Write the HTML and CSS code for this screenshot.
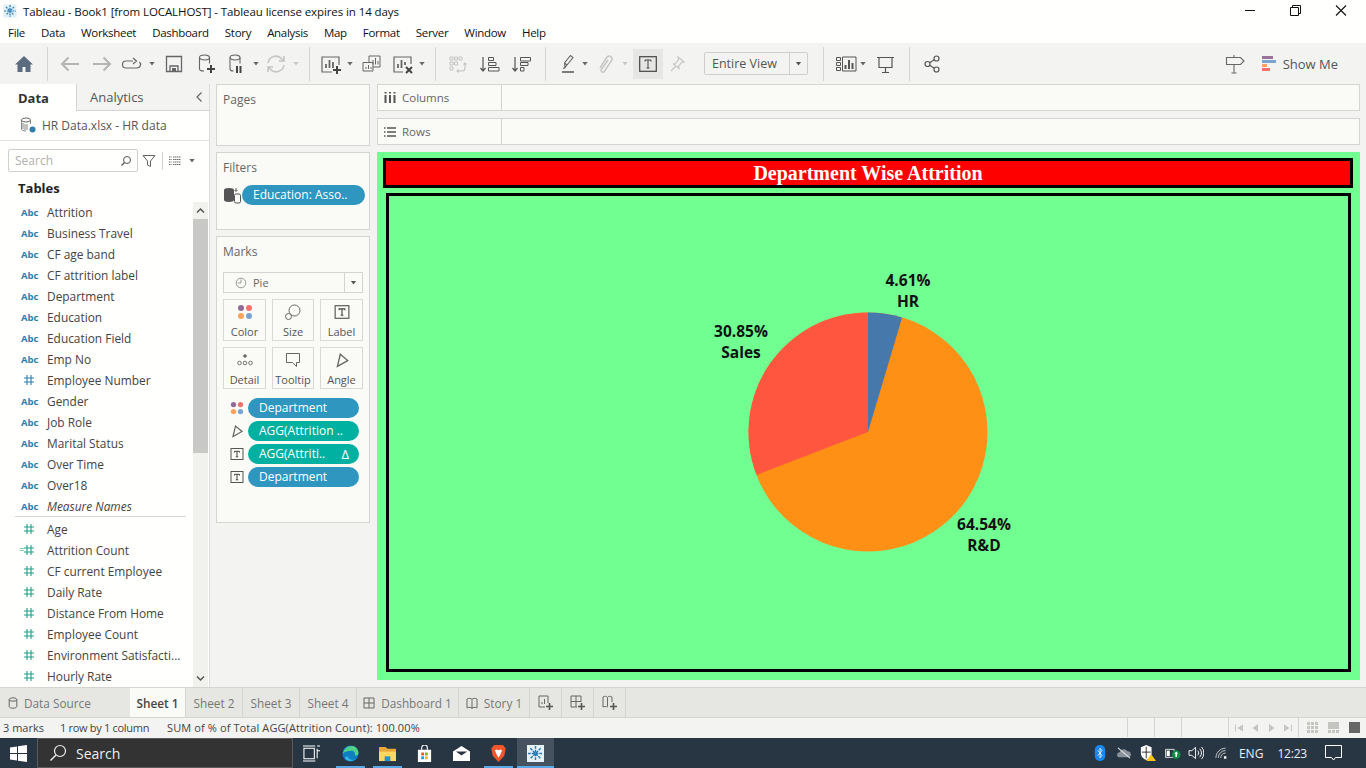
FILE: index.html
```html
<!DOCTYPE html>
<html lang="en">
<head>
	<meta charset="UTF-8">
	<title>Tableau - Book1</title>
	<link rel="stylesheet" href="styles.css">
</head>
<body>
	<svg class="sprite">
		<symbol id="hash" viewBox="0 0 12 12"><path d="M4 1v10M8 1v10M1 4h10M1 8h10" fill="none" stroke="currentColor" stroke-width="1.1"/></symbol>
		<symbol id="tbox" viewBox="0 0 14 14"><rect x="1" y="1.5" width="12" height="11" fill="none" stroke="#555" stroke-width="1"/><path d="M4.5 5.5V4.3h5v1.2M7 4.3v5.4M5.8 9.8h2.4" fill="none" stroke="#444" stroke-width="1"/></symbol>
		<symbol id="dots" viewBox="0 0 16 16"><circle cx="4" cy="4" r="3" fill="#8f6b95"/><circle cx="12" cy="4" r="3" fill="#f8706a"/><circle cx="4" cy="12" r="3" fill="#fba35c"/><circle cx="12" cy="12" r="3" fill="#7ba3d0"/></symbol>
		<symbol id="angle" viewBox="0 0 14 14"><path d="M3 12.5 5.5 2l6.5 5.5z" fill="none" stroke="#666" stroke-width="1.2"/></symbol>
	</svg>

	<!-- window title and menu -->
	<div class="titlebar">
		<svg class="app-logo" viewBox="0 0 14 14"><rect x="0.5" y="0.5" width="13" height="13" fill="#dff0f8"/><path d="M7 1v12M1 7h12M3 3l8 8M11 3l-8 8" stroke="#2a78ae" stroke-width="1.2" stroke-dasharray="2 0.8"/></svg>
		<span class="title-text">Tableau - Book1 [from LOCALHOST] - Tableau license expires in 14 days</span>
		<div class="win-btns">
			<svg viewBox="0 0 46 22"><path d="M19 10.500h10" stroke="#111"/></svg>
			<svg viewBox="0 0 46 22"><path d="M18.500 7.500h8v8h-8zM20.500 7.500v-2h8v8h-2" fill="none" stroke="#111"/></svg>
			<svg viewBox="0 0 46 22"><path d="M18 5.500l10 10M28 5.500l-10 10" stroke="#111" stroke-width="1.100"/></svg>
		</div>
	</div>
	<div class="menubar">
		<span>File</span><span>Data</span><span>Worksheet</span><span>Dashboard</span><span>Story</span><span>Analysis</span><span>Map</span><span>Format</span><span>Server</span><span>Window</span><span>Help</span>
	</div>

	<!-- toolbar -->
	<div class="toolbar">
		<svg class="tool m12" viewBox="0 0 24 24"><path d="M12 4 3 12.500h2.500V20h5v-5h3v5h5v-7.500H21z" fill="#5b6c80"/></svg>
		<i class="sep m11"></i>
		<svg class="tool m10" viewBox="0 0 24 24"><path d="M21 12H4M10.500 5.500 4 12l6.500 6.500" fill="none" stroke="#b4b4b2" stroke-width="2"/></svg>
		<svg class="tool m8" viewBox="0 0 24 24"><path d="M3 12h17M13.500 5.500 20 12l-6.500 6.500" fill="none" stroke="#b4b4b2" stroke-width="2"/></svg>
		<svg class="tool m5" viewBox="0 0 24 24"><path d="M14 9H7a3.500 3.500 0 0 0 0 7h11a3.500 3.500 0 0 0 2.500-6M14 6l3.500 3-3.500 3" fill="none" stroke="#666" stroke-width="1.200"/></svg>
		<i class="caret m5"></i>
		<svg class="tool m6" viewBox="0 0 24 24"><path d="M4.500 4.500h15v15h-15zM8 19.500v-5.500h8v5.500" fill="none" stroke="#666" stroke-width="1.300"/><path d="M10 16h4v3h-4z" fill="#666"/></svg>
		<svg class="tool m7" viewBox="0 0 24 24"><ellipse cx="11.500" cy="5.500" rx="5" ry="2.500" fill="none" stroke="#666" stroke-width="1.100"/><path d="M6.500 5.500v11.500c0 1.200 2 2 4.500 2M16.500 5.500v6" fill="none" stroke="#666" stroke-width="1.100"/><path d="M18 13v8M14 17h8" stroke="#444" stroke-width="2"/></svg>
		<svg class="tool m7" viewBox="0 0 24 24"><ellipse cx="11" cy="5.500" rx="5" ry="2.500" fill="none" stroke="#666" stroke-width="1.100"/><path d="M6 5.500v11.500c0 1.200 1.500 2 3.500 2M16 5.500v6" fill="none" stroke="#666" stroke-width="1.100"/><path d="M13 14v7M16.500 14v7" stroke="#444" stroke-width="2"/></svg>
		<i class="caret m4"></i>
		<svg class="tool m4" viewBox="0 0 24 24"><path d="M4 11a8 8 0 0 1 14-4l2 2M20 13a8 8 0 0 1-14 4l-2-2M20 4v5h-5M4 20v-5h5" fill="none" stroke="#c4c4c2" stroke-width="1.500"/></svg>
		<i class="caret faint m4"></i>
		<i class="sep m9"></i>

		<svg class="tool m9" viewBox="0 0 24 24"><path d="M20 13V5H3v15h10" fill="none" stroke="#666" stroke-width="1.200"/><path d="M7 16v-4M10.500 16V8M14 16v-6" stroke="#666" stroke-width="1.800"/><path d="M18 14v8M14 18h8" stroke="#444" stroke-width="2"/></svg>
		<i class="caret m3"></i>
		<svg class="tool m5" viewBox="0 0 24 24"><path d="M10 10V4h11v11h-7" fill="none" stroke="#666"/><path d="M4 10.500h10v8.500H4z" fill="#f3f4f2" stroke="#666"/><path d="M14 12.500V8M16.500 12.500V6M19 12.500V9M7 17v-2M9.500 17v-4M12 17v-2" stroke="#666"/></svg>
		<svg class="tool m8" viewBox="0 0 24 24"><path d="M20 12V5H3v15h9" fill="none" stroke="#666" stroke-width="1.200"/><path d="M7 16v-4M10.500 16V8M14 13v-3" stroke="#666" stroke-width="1.800"/><path d="M15 15l6 6M21 15l-6 6" stroke="#444" stroke-width="2"/></svg>
		<i class="caret m3"></i>
		<i class="sep m9"></i>

		<svg class="tool m9" viewBox="0 0 24 24"><path d="M5 5h3v3H5zM9.500 5h3v3h-3zM14 5h3v3h-3zM5 10h3v3H5zM9.500 10h3v3h-3zM5 15h3v3H5z" fill="none" stroke="#c4c4c2"/><path d="M20 11v5a3 3 0 0 1-3 3h-5M18.500 12.500 20 11l1.500 1.500M13.500 17.500 12 19l1.500 1.500" fill="none" stroke="#c4c4c2" stroke-width="1.100"/></svg>
		<svg class="tool m9" viewBox="0 0 24 24"><path d="M5 5v14M2.500 16 5 19l2.500-3" fill="none" stroke="#555" stroke-width="1.200"/><path d="M10.500 5.500h5v3h-5zM10.500 10.500h7.500v3h-7.500zM10.500 15.500h10.500v3.500H10.500z" fill="none" stroke="#555"/></svg>
		<svg class="tool m8" viewBox="0 0 24 24"><path d="M5 5v14M2.500 16 5 19l2.500-3" fill="none" stroke="#555" stroke-width="1.200"/><path d="M10.500 5.500h10v3.500h-10zM10.500 10.500h7.500v3h-7.500zM10.500 15.500h3.500v3.500h-3.500z" fill="none" stroke="#555"/></svg>
		<i class="sep m11"></i>

		<svg class="tool m10" viewBox="0 0 24 24"><path d="M9 15.500 8.500 11l6-7.500 2.500 2-6 7.500zM8.500 11l2.500 2M9 15.500l-2 1" fill="none" stroke="#666" stroke-width="1.100"/><path d="M6 20h12" stroke="#555" stroke-width="1.500"/></svg>
		<i class="caret m1"></i>
		<svg class="tool m4" viewBox="0 0 24 24"><path d="M7 16 14 5a3 3 0 0 1 5 3l-8 12a2 2 0 0 1-3-2l7-10" fill="none" stroke="#c4c4c2" stroke-width="1.400"/></svg>
		<i class="caret faint m4"></i>
		<div class="tool-on m4"><svg class="t-icon" viewBox="0 0 18 16"><rect x="0.700" y="0.700" width="16.600" height="14.600" fill="none" stroke="#444" stroke-width="1.200"/><path d="M6 5.500V4h6v1.500M9 4v8M7.500 12h3" fill="none" stroke="#444"/></svg></div>
		<svg class="tool m2" viewBox="0 0 24 24"><path d="M13 5l6 5-2.500.5-3 4 .5 2-5.500-4.500 2-.5 3-4zM10.500 14.500 6 19" fill="none" stroke="#c4c4c2" stroke-width="1.200"/></svg>
		<div class="fit m15"><span class="fit-text">Entire View</span><span class="fit-arrow"><i class="caret dark"></i></span></div>
		<i class="sep m15"></i>

		<svg class="tool m10" viewBox="0 0 24 24"><path d="M2.500 5.500h4v3h-4zM2.500 10.500h4v3h-4zM2.500 15.500h4v3h-4zM8.500 5h13.500v14H8.500z" fill="none" stroke="#555"/><path d="M11.500 17v-4M15 17V8M18.500 17v-6" stroke="#555" stroke-width="2"/></svg>
		<i class="caret m1"></i>
		<svg class="tool m6" viewBox="0 0 24 24"><path d="M4 5.500h17M6 5.500v10h13v-10M12.500 15.500v5M9 20.500h7" fill="none" stroke="#555" stroke-width="1.200"/></svg>
		<i class="sep m12"></i>
		<svg class="tool m10" viewBox="0 0 24 24"><circle cx="7.500" cy="12" r="2.500" fill="none" stroke="#555" stroke-width="1.200"/><circle cx="16.500" cy="6.500" r="2.500" fill="none" stroke="#555" stroke-width="1.200"/><circle cx="16.500" cy="17.500" r="2.500" fill="none" stroke="#555" stroke-width="1.200"/><path d="M9.700 10.700l4.600-2.900M9.700 13.300l4.600 2.900" stroke="#555" stroke-width="1.200"/></svg>

		<svg class="tool guide" viewBox="0 0 24 24"><path d="M3.500 5.500h14l3.500 3.500-3.500 3.500h-14zM11 3v2.500M11 12.500V21M8.500 21h5" fill="none" stroke="#666" stroke-width="1.100"/></svg>
		<div class="showme">
			<svg class="showme-icon" viewBox="0 0 15 16"><rect width="11" height="3" fill="#95739a"/><rect y="4" width="14" height="3" fill="#7ba3d0"/><rect y="8" width="5" height="3" fill="#fba35c"/><rect y="12" width="8" height="3" fill="#f8706a"/></svg>
			<span>Show Me</span>
		</div>
	</div>

	<div class="main">
		<!-- data pane -->
		<div class="data-pane">
			<div class="pane-tabs">
				<div class="pane-tab active">Data</div>
				<div class="pane-tab">Analytics<svg class="collapse" viewBox="0 0 8 12"><path d="M6.500 1.500 2 6l4.500 4.500" fill="none" stroke="#666" stroke-width="1.200"/></svg></div>
			</div>
			<div class="source">
				<svg class="source-icon" viewBox="0 0 16 16"><ellipse cx="6" cy="3" rx="4.500" ry="2" fill="none" stroke="#666"/><path d="M1.500 3v9c0 1 2 2 4.500 2M10.500 3v4M3 6v6M5 7v6M7 7v6" fill="none" stroke="#666" stroke-width="0.800"/><circle cx="12.500" cy="12.500" r="3" fill="#2e7ea8"/></svg>
				<span>HR Data.xlsx - HR data</span>
			</div>
			<div class="search-row">
				<div class="search"><span>Search</span><svg viewBox="0 0 12 12"><circle cx="7" cy="5" r="3.500" fill="none" stroke="#555"/><path d="M4.500 7.500 1.500 10.500" stroke="#555" stroke-width="1.200"/></svg></div>
				<svg class="funnel" viewBox="0 0 14 14"><path d="M1 1.500h12L8.500 7v5.500l-3-1.500V7z" fill="none" stroke="#666"/></svg>
				<i class="vline"></i>
				<svg class="listview" viewBox="0 0 12 10"><path d="M0 1h2.500M4 1h8M0 3.500h2.500M4 3.500h8M0 6h2.500M4 6h8M0 8.500h2.500M4 8.500h8" stroke="#666" stroke-dasharray="1.500 0.500"/></svg>
				<i class="caret m7"></i>
			</div>
			<div class="tables-head">Tables</div>
			<div class="fields-wrap">
				<div class="fields">
					<div class="field"><b class="abc">Abc</b><span>Attrition</span></div>
					<div class="field"><b class="abc">Abc</b><span>Business Travel</span></div>
					<div class="field"><b class="abc">Abc</b><span>CF age band</span></div>
					<div class="field"><b class="abc">Abc</b><span>CF attrition label</span></div>
					<div class="field"><b class="abc">Abc</b><span>Department</span></div>
					<div class="field"><b class="abc">Abc</b><span>Education</span></div>
					<div class="field"><b class="abc">Abc</b><span>Education Field</span></div>
					<div class="field"><b class="abc">Abc</b><span>Emp No</span></div>
					<div class="field"><svg class="hash blue"><use href="#hash"/></svg><span>Employee Number</span></div>
					<div class="field"><b class="abc">Abc</b><span>Gender</span></div>
					<div class="field"><b class="abc">Abc</b><span>Job Role</span></div>
					<div class="field"><b class="abc">Abc</b><span>Marital Status</span></div>
					<div class="field"><b class="abc">Abc</b><span>Over Time</span></div>
					<div class="field"><b class="abc">Abc</b><span>Over18</span></div>
					<div class="field"><b class="abc">Abc</b><span class="italic">Measure Names</span></div>
					<div class="field-rule"></div>
					<div class="field"><svg class="hash"><use href="#hash"/></svg><span>Age</span></div>
					<div class="field"><em class="calc">=</em><svg class="hash"><use href="#hash"/></svg><span>Attrition Count</span></div>
					<div class="field"><svg class="hash"><use href="#hash"/></svg><span>CF current Employee</span></div>
					<div class="field"><svg class="hash"><use href="#hash"/></svg><span>Daily Rate</span></div>
					<div class="field"><svg class="hash"><use href="#hash"/></svg><span>Distance From Home</span></div>
					<div class="field"><svg class="hash"><use href="#hash"/></svg><span>Employee Count</span></div>
					<div class="field"><svg class="hash"><use href="#hash"/></svg><span>Environment Satisfacti...</span></div>
					<div class="field"><svg class="hash"><use href="#hash"/></svg><span>Hourly Rate</span></div>
				</div>
				<div class="scrollbar">
					<svg class="scroll-btn" viewBox="0 0 15 17"><path d="M4 10.500 7.500 7l3.500 3.500" fill="none" stroke="#555" stroke-width="1.500"/></svg>
					<div class="scroll-thumb"></div>
					<svg class="scroll-btn end" viewBox="0 0 15 17"><path d="M4 6.500 7.500 10 11 6.500" fill="none" stroke="#555" stroke-width="1.500"/></svg>
				</div>
			</div>
		</div>

		<!-- pages, filters, marks -->
		<div class="cards">
			<div class="card pages"><div class="card-title">Pages</div></div>
			<div class="card filters">
				<div class="card-title">Filters</div>
				<div class="filter-row">
					<svg class="filter-icon" viewBox="0 0 18 18"><ellipse cx="6" cy="4" rx="5" ry="2" fill="#555"/><path d="M1 4v10c0 1.200 2 2 5 2s5-.8 5-2V4z" fill="#555"/><path d="M13 2v3M11.500 4 13 5.500 14.500 4" fill="none" stroke="#555"/><rect x="11.500" y="8" width="6" height="9" rx="1.500" fill="#fafaf7" stroke="#555"/></svg>
					<div class="pill blue wide">Education: Asso..</div>
				</div>
			</div>
			<div class="card marks">
				<div class="card-title">Marks</div>
				<div class="mark-type">
					<svg viewBox="0 0 12 12"><circle cx="6" cy="6" r="4.800" fill="none" stroke="#999"/><path d="M6 2.500V6H2.800" fill="none" stroke="#999"/></svg>
					<span class="mark-name">Pie</span>
					<span class="mark-arrow"><i class="caret dark"></i></span>
				</div>
				<div class="mark-btns">
					<div class="mark-btn"><svg viewBox="0 0 16 16"><use href="#dots"/></svg><span>Color</span></div>
					<div class="mark-btn"><svg viewBox="0 0 16 16"><circle cx="9.500" cy="6.500" r="5.500" fill="none" stroke="#666"/><circle cx="3.500" cy="12.500" r="3" fill="#fafaf7" stroke="#666"/></svg><span>Size</span></div>
					<div class="mark-btn"><svg viewBox="0 0 14 14"><use href="#tbox"/></svg><span>Label</span></div>
					<div class="mark-btn"><svg viewBox="0 0 16 16"><circle cx="8" cy="4" r="1.800" fill="#666"/><circle cx="2.500" cy="11" r="1.800" fill="none" stroke="#666" stroke-width="0.900"/><circle cx="8" cy="11" r="1.800" fill="none" stroke="#666" stroke-width="0.900"/><circle cx="13.500" cy="11" r="1.800" fill="none" stroke="#666" stroke-width="0.900"/></svg><span>Detail</span></div>
					<div class="mark-btn"><svg viewBox="0 0 16 16"><path d="M1.500 1.500h13v9h-3v4l-4-4h-6z" fill="none" stroke="#666"/></svg><span>Tooltip</span></div>
					<div class="mark-btn"><svg viewBox="0 0 14 14"><use href="#angle"/></svg><span>Angle</span></div>
				</div>
				<div class="pill-row"><svg class="pill-icon" viewBox="0 0 16 16"><use href="#dots"/></svg><div class="pill blue">Department</div></div>
				<div class="pill-row"><svg class="pill-icon" viewBox="0 0 14 14"><use href="#angle"/></svg><div class="pill teal">AGG(Attrition ..</div></div>
				<div class="pill-row"><svg class="pill-icon" viewBox="0 0 14 14"><use href="#tbox"/></svg><div class="pill teal split"><span>AGG(Attriti..</span><span class="delta">&#916;</span></div></div>
				<div class="pill-row"><svg class="pill-icon" viewBox="0 0 14 14"><use href="#tbox"/></svg><div class="pill blue">Department</div></div>
			</div>
		</div>

		<!-- shelves and view -->
		<div class="workspace">
			<div class="shelf">
				<div class="shelf-name"><svg viewBox="0 0 12 12"><path d="M1.500 3v8M6 3v8M10.500 3v8" stroke="#555" stroke-width="2"/><path d="M1.500 0v1.500M6 0v1.500M10.500 0v1.500" stroke="#555" stroke-width="2"/></svg>Columns</div>
			</div>
			<div class="shelf">
				<div class="shelf-name"><svg viewBox="0 0 12 12"><path d="M3 2h9M3 6h9M3 10h9M0 2h1.500M0 6h1.500M0 10h1.500" stroke="#555" stroke-width="1.500"/></svg>Rows</div>
			</div>
			<div class="canvas">
				<div class="view-title">Department Wise Attrition</div>
				<div class="view-frame">
					<svg class="pie" width="959" height="473" viewBox="0 0 959 473">
						<circle cx="479" cy="236" r="119.500" fill="#ff9016"/>
						<path d="M479 236V116.500A119.500 119.500 0 0 1 513.100 121.500z" fill="#4778ac"/>
						<path d="M479 236 367.500 278.900A119.500 119.500 0 0 1 479 116.500z" fill="#ff5640"/>
						<text class="pie-label" x="519" y="90">4.61%</text>
						<text class="pie-label" x="519" y="111">HR</text>
						<text class="pie-label" x="352" y="141">30.85%</text>
						<text class="pie-label" x="352" y="162">Sales</text>
						<text class="pie-label" x="595" y="334">64.54%</text>
						<text class="pie-label" x="595" y="355">R&amp;D</text>
					</svg>
				</div>
			</div>
		</div>
	</div>

	<!-- sheet tabs -->
	<div class="tabs">
		<div class="tab source-tab"><svg viewBox="0 0 10 12"><ellipse cx="5" cy="2.500" rx="3.800" ry="1.700" fill="none" stroke="#666"/><path d="M1.200 2.500v7c0 1 1.700 1.700 3.800 1.700s3.800-.7 3.800-1.700v-7" fill="none" stroke="#666"/></svg>Data Source</div>
		<div class="tab on w56">Sheet 1</div>
		<div class="tab w57">Sheet 2</div>
		<div class="tab w57">Sheet 3</div>
		<div class="tab w57">Sheet 4</div>
		<div class="tab w102"><svg viewBox="0 0 12 12"><path d="M1 1h10v10H1zM6 1v10M1 6h10" fill="none" stroke="#666"/></svg>Dashboard 1</div>
		<div class="tab w70"><svg viewBox="0 0 12 12"><path d="M1 2c2-1 4-1 5 .5C7 1 9 1 11 2v9c-2-1-4-1-5 .5C5 10 3 10 1 11zM6 2.500v9" fill="none" stroke="#666"/></svg>Story 1</div>
		<div class="tab w32"><svg class="big" viewBox="0 0 16 16"><path d="M10 8V1H1v11h6M4 9V7M6.500 9V4" fill="none" stroke="#666"/><path d="M11.500 8v7M8 11.500h7" stroke="#555" stroke-width="1.600"/></svg></div>
		<div class="tab w32"><svg class="big" viewBox="0 0 16 16"><path d="M11 7V1H1v11h6M6 1v11M1 6.500h10" fill="none" stroke="#666"/><path d="M11.500 8v7M8 11.500h7" stroke="#555" stroke-width="1.600"/></svg></div>
		<div class="tab w32"><svg class="big" viewBox="0 0 16 16"><path d="M1 2c2-1 3.500-1 4.500.5C6.500 1 8 1 10 2v5M1 2v10c1.500-.7 3-.7 4.500 0M5.500 2.500v9" fill="none" stroke="#666"/><path d="M11.500 8v7M8 11.500h7" stroke="#555" stroke-width="1.600"/></svg></div>
	</div>

	<!-- status bar -->
	<div class="statusbar">
		<span class="s1">3 marks</span>
		<span class="s2">1 row by 1 column</span>
		<span class="s3">SUM of % of Total AGG(Attrition Count): 100.00%</span>
		<div class="status-right">
			<i class="status-cell"></i><i class="status-cell"></i><i class="status-cell wide"></i>
			<div class="pager">
				<svg viewBox="0 0 10 10"><path d="M1 1.500v7h1v-7zM9 1.500v7L3.500 5z" fill="#c4c4c0"/></svg>
				<svg viewBox="0 0 10 10"><path d="M8 1v8L2.500 5z" fill="#c4c4c0"/></svg>
				<svg viewBox="0 0 10 10"><path d="M2 1v8l5.500-4z" fill="#c4c4c0"/></svg>
				<svg viewBox="0 0 10 10"><path d="M9 1.500v7H8v-7zM1 1.500v7L6.500 5z" fill="#c4c4c0"/></svg>
			</div>
			<div class="views">
				<svg viewBox="0 0 12 12"><path d="M0 0h3v3H0zM4 0h3v3H4zM8 0h3v3H8zM0 4h3v3H0zM4 4h3v3H4zM8 4h3v3H8zM0 8h3v3H0zM4 8h3v3H4zM8 8h3v3H8z" fill="#c4c4c0"/></svg>
				<svg viewBox="0 0 12 12"><path d="M0 0h11v7H0zM0 8h3v3H0zM4 8h3v3H4zM8 8h3v3H8z" fill="#c4c4c0"/></svg>
				<svg viewBox="0 0 12 12"><path d="M0 0h11v11H0z" fill="#666"/></svg>
			</div>
		</div>
	</div>

	<!-- windows taskbar -->
	<div class="taskbar">
		<div class="start"><svg viewBox="0 0 17 17"><path d="M0 2.500 7 1.500v6.500H0zM8 1.300 17 0v8H8zM0 9h7v6.500L0 14.500zM8 9h9v8L8 15.700z" fill="#fff"/></svg></div>
		<div class="task-search">
			<svg viewBox="0 0 18 18"><circle cx="11" cy="7" r="5.500" fill="none" stroke="#eee" stroke-width="1.200"/><path d="M7 11 1.500 16.500" stroke="#eee" stroke-width="1.400"/></svg>
			<span>Search</span>
		</div>
		<div class="task-app first"><svg viewBox="0 0 18 18"><path d="M1 3.500h11v11H1zM0 1h13M0 17h13M15 1h3M15 6h3M15 9v0M15 4v10" fill="none" stroke="#fff" stroke-width="1.100"/></svg></div>
		<div class="task-app open"><svg viewBox="0 0 18 18"><circle cx="9" cy="9" r="8.500" fill="#0f7fc4"/><path d="M1 9c1-5 5-8.500 10-8 4 .5 6.500 4 6.500 7.500 0 2-2 3-4 2.500 1-3-1-5-3.500-5C6 6 3 7 1 9z" fill="#4fd18b"/><path d="M6 12c.5 3 4 5 8 3-4 3-9 2-11-1 1-1 2-2 3-2z" fill="#38b8e8"/></svg></div>
		<div class="task-app open"><svg viewBox="0 0 18 16"><path d="M0 1h7l2 2h9v4H0z" fill="#e8a83a"/><path d="M0 6h18v10H0z" fill="#ffd468"/><path d="M6 11h6v5H6z" fill="#2a8fd0"/></svg></div>
		<div class="task-app"><svg viewBox="0 0 16 18"><path d="M1 5h14v13H1z" fill="#fff"/><path d="M5 5V3a3 3 0 0 1 6 0v2" fill="none" stroke="#fff" stroke-width="1.200"/><path d="M4.500 8H7.500V11H4.500z" fill="#f25022"/><path d="M8.500 8H11.500V11H8.500z" fill="#7fba00"/><path d="M4.500 12H7.500V15H4.500z" fill="#00a4ef"/><path d="M8.500 12H11.500V15H8.500z" fill="#ffb900"/></svg></div>
		<div class="task-app"><svg viewBox="0 0 18 16"><path d="M0 6 9 0l9 6v10H0z" fill="#fff"/><path d="M3 6h12l-6 4z" fill="#283644"/></svg></div>
		<div class="task-app open"><svg viewBox="0 0 16 19"><path d="M3 0h10l3 4-1.500 8L8 19l-6.500-7L0 4z" fill="#f1562b"/><path d="M4 6l2-1 2 1 2-1 2 1-2 5-2 3-2-3z" fill="#fff"/></svg></div>
		<div class="task-app active open"><svg viewBox="0 0 18 18"><rect width="18" height="18" fill="#e6f2f8"/><path d="M9 1v16M1 9h16M3.500 3.500l11 11M14.500 3.500l-11 11" stroke="#2a78ae" stroke-width="1.500" stroke-dasharray="3 1"/></svg></div>

		<div class="tray">
			<svg class="t-bt" viewBox="0 0 13 20"><rect width="13" height="20" rx="6" fill="#1a86f0"/><path d="M3.500 6.500 9 13l-2.500 3V4L9 7l-5.500 6.500" fill="none" stroke="#fff"/></svg>
			<svg class="t-cloud" viewBox="0 0 18 14"><path d="M4 12a3 3 0 0 1 0-6 5 5 0 0 1 9-1 3.500 3.500 0 0 1 1 7z" fill="#8a939b"/><path d="M2 1l14 12" stroke="#e6e6e6" stroke-width="1.300"/></svg>
			<svg class="t-shield" viewBox="0 0 18 18"><path d="M7 0 13 2.500V9c0 4-3 6.500-6 8-3-1.500-6-4-6-8V2.500z" fill="#fff"/><path d="M7 2v13M2 8h10" stroke="#222"/><path d="M12.500 10 18 18H7z" fill="#fcc419"/></svg>
			<svg class="t-batt" viewBox="0 0 20 14"><path d="M.5 2.500h11v10H.500z" fill="none" stroke="#fff"/><rect x="2" y="4" width="4" height="7" fill="#fff"/><circle cx="14" cy="9" r="5.500" fill="#0b8a43"/><path d="M14 5l2.500 3H15v4h-2V8h-1.500z" fill="#fff"/></svg>
			<svg class="t-vol" viewBox="0 0 17 15"><path d="M1 5h3l4-3.500v12L4 10H1z" fill="none" stroke="#fff"/><path d="M10.500 5a4 4 0 0 1 0 5M12.500 3a7 7 0 0 1 0 9M14.500 1a10 10 0 0 1 0 13" fill="none" stroke="#fff"/></svg>
			<svg class="t-wifi" viewBox="0 0 16 14"><path d="M1 13A12 12 0 0 1 13 1M4 13a9 9 0 0 1 9-9M7 13a6 6 0 0 1 6-6" fill="none" stroke="#ddd"/><rect x="11" y="11" width="3" height="3" fill="#fff"/></svg>
			<span class="t-lang">ENG</span>
			<span class="t-time">12:23</span>
			<svg class="t-note" viewBox="0 0 17 16"><path d="M.500.500h16v12H10.500l-2 2.500-2-2.500h-6z" fill="none" stroke="#fff"/></svg>
		</div>
	</div>
</body>
</html>
```

FILE: styles.css
```css
* {
	box-sizing: border-box;
}
html, body {
	margin: 0;
	width: 1366px;
	height: 768px;
	overflow: hidden;
}
body {
	font-family: "Open Sans", "Noto Sans", sans-serif;
	font-size: 12px;
	color: #333;
	background: #f3f4f2;
}
i, em {
	font-style: normal;
	display: block;
}
.sprite {
	display: none;
}

/* title + menu */
.titlebar {
	height: 22px;
	background: #fffffd;
	display: flex;
	align-items: center;
	padding-left: 3px;
	color: #111;
}
.app-logo {
	width: 14px;
	height: 14px;
	margin-right: 6px;
}
.title-text {
	font-size: 11.5px;
	letter-spacing: -0.09px;
}
.win-btns {
	margin-left: auto;
	display: flex;
	padding-right: 2px;
}
.win-btns svg {
	width: 46px;
	height: 22px;
}
.menubar {
	height: 21px;
	background: #fffffd;
	display: flex;
	align-items: center;
	padding-left: 8px;
	gap: 16px;
	color: #111;
	font-size: 11.5px;
	letter-spacing: -0.3px;
}

/* toolbar */
.toolbar {
	height: 41px;
	background: #f3f4f2;
	display: flex;
	align-items: center;
}
.tool {
	width: 24px;
	height: 24px;
	flex: none;
}
.caret {
	width: 8px;
	height: 4px;
	flex: none;
	background: #666;
	clip-path: polygon(12% 0, 88% 0, 50% 100%);
}
.caret.faint {
	background: #c8c8c6;
}
.caret.dark {
	background: #555;
}
.sep {
	width: 1px;
	height: 34px;
	flex: none;
	background: #d4d4d0;
}
.m1 { margin-left: 1px; }
.m2 { margin-left: 2px; }
.m3 { margin-left: 3px; }
.m4 { margin-left: 4px; }
.m5 { margin-left: 5px; }
.m6 { margin-left: 6px; }
.m7 { margin-left: 7px; }
.m8 { margin-left: 8px; }
.m9 { margin-left: 9px; }
.m10 { margin-left: 10px; }
.m11 { margin-left: 11px; }
.m12 { margin-left: 12px; }
.m15 { margin-left: 15px; }
.tool-on {
	width: 30px;
	height: 30px;
	background: #e6e7e4;
	display: flex;
	align-items: center;
	justify-content: center;
	flex: none;
}
.t-icon {
	width: 18px;
	height: 16px;
}
.fit {
	width: 104px;
	height: 23px;
	flex: none;
	display: flex;
	border: 1px solid #cfcfcb;
	border-radius: 2px;
	font-size: 12.5px;
	color: #555;
}
.fit-text {
	width: 85px;
	padding-left: 7px;
	line-height: 22px;
	border-right: 1px solid #cfcfcb;
}
.fit-arrow {
	flex: 1;
	display: flex;
	align-items: center;
	justify-content: center;
}
.guide {
	margin-left: auto;
}
.showme {
	display: flex;
	align-items: center;
	margin: 0 28px 0 15px;
	font-size: 13px;
	color: #555;
}
.showme-icon {
	width: 15px;
	height: 16px;
	margin-right: 6px;
}

/* main area */
.main {
	height: 603px;
	display: flex;
}

/* data pane */
.data-pane {
	width: 210px;
	flex: none;
	background: #fffffd;
	border-right: 1px solid #dcdcd8;
	display: flex;
	flex-direction: column;
}
.pane-tabs {
	height: 27px;
	display: flex;
	flex: none;
}
.pane-tab {
	flex: 1;
	display: flex;
	align-items: center;
	padding-left: 13px;
	font-size: 13px;
	color: #555;
	background: #f3f4f2;
	border-bottom: 1px solid #d4d4d0;
	position: relative;
}
.pane-tab.active {
	flex: none;
	width: 77px;
	padding-left: 18px;
	font-weight: 700;
	color: #333;
	background: #fffffd;
	border-right: 1px solid #d4d4d0;
	border-bottom: none;
}
.collapse {
	width: 8px;
	height: 12px;
	position: absolute;
	right: 6px;
	top: 7px;
}
.source {
	height: 30px;
	flex: none;
	display: flex;
	align-items: center;
	padding: 0 0 1px 20px;
	border-bottom: 1px solid #e2e2de;
	color: #555;
	font-size: 12px;
}
.source-icon {
	width: 16px;
	height: 16px;
	margin-right: 6px;
}
.search-row {
	height: 34px;
	flex: none;
	display: flex;
	align-items: center;
	padding: 5px 0 0 8px;
}
.search {
	width: 130px;
	height: 23px;
	border: 1px solid #cfcfcb;
	border-radius: 2px;
	display: flex;
	align-items: center;
	justify-content: space-between;
	padding: 0 5px 0 6px;
	color: #b0b0b0;
	font-size: 12px;
}
.search svg {
	width: 12px;
	height: 12px;
}
.funnel {
	width: 14px;
	height: 14px;
	margin-left: 4px;
}
.vline {
	width: 1px;
	height: 18px;
	background: #d4d4d0;
	margin: 0 6px 0 6px;
}
.listview {
	width: 12px;
	height: 10px;
}
.tables-head {
	height: 23px;
	flex: none;
	padding: 4px 0 0 18px;
	font-size: 13px;
	font-weight: 700;
	color: #222;
}
.fields-wrap {
	flex: 1;
	min-height: 0;
	display: flex;
	overflow: hidden;
}
.fields {
	width: 193px;
	flex: none;
	padding-top: 3px;
}
.field {
	height: 21px;
	display: flex;
	align-items: center;
	position: relative;
	padding-left: 47px;
	color: #444;
	font-size: 11.9px;
	white-space: nowrap;
}
.abc {
	position: absolute;
	left: 21px;
	top: 6px;
	font-size: 9.5px;
	line-height: 12px;
	color: #2e7ea8;
}
.hash {
	position: absolute;
	left: 23px;
	top: 5px;
	width: 12px;
	height: 12px;
	color: #1f9e89;
}
.hash.blue {
	color: #2e7ea8;
}
.calc {
	position: absolute;
	left: 19px;
	top: 4px;
	font-size: 9px;
	color: #1f9e89;
}
.italic {
	font-style: italic;
}
.field-rule {
	height: 1px;
	margin: 0 7px 1px 15px;
	background: #d8d8d4;
}
.scrollbar {
	width: 15px;
	flex: none;
	margin-top: 4px;
	background: #f1f1ee;
	display: flex;
	flex-direction: column;
}
.scroll-btn {
	width: 15px;
	height: 17px;
	flex: none;
}
.scroll-btn.end {
	margin-top: auto;
}
.scroll-thumb {
	height: 234px;
	background: #c8c8c6;
}

/* cards column */
.cards {
	width: 166px;
	flex: none;
	padding-right: 6px;
	padding-left: 6px;
	display: flex;
	flex-direction: column;
	gap: 6px;
}
.card {
	background: #fafaf7;
	border: 1px solid #d4d4d0;
	padding: 7px 6px 0;
}
.card-title {
	font-size: 12px;
	color: #666;
	line-height: 16px;
}
.pages {
	height: 62px;
}
.filters {
	height: 78px;
}
.marks {
	height: 287px;
}
.filter-row {
	display: flex;
	align-items: center;
	margin-top: 9px;
}
.filter-icon {
	width: 18px;
	height: 18px;
	margin-right: 1px;
	flex: none;
}
.pill {
	height: 20px;
	border-radius: 10px;
	color: #fff;
	font-size: 12px;
	line-height: 20px;
	padding-left: 11px;
	width: 111px;
	white-space: nowrap;
	flex: none;
}
.pill.wide {
	width: 123px;
}
.pill.blue {
	background: #2f96bf;
}
.pill.teal {
	background: #00b0a0;
}
.pill.split {
	display: flex;
	justify-content: space-between;
	padding-right: 10px;
}
.delta {
	font-size: 13px;
}
.mark-type {
	height: 21px;
	margin-top: 12px;
	border: 1px solid #d4d4d0;
	display: flex;
	align-items: center;
	padding-left: 11px;
	font-size: 11px;
	color: #666;
}
.mark-type svg {
	width: 12px;
	height: 12px;
	margin-right: 6px;
}
.mark-name {
	flex: 1;
}
.mark-arrow {
	width: 18px;
	height: 100%;
	border-left: 1px solid #d4d4d0;
	display: flex;
	align-items: center;
	justify-content: center;
}
.mark-btns {
	display: grid;
	grid-template-columns: 43px 42px 43px;
	grid-auto-rows: 42px;
	column-gap: 6px;
	row-gap: 6px;
	margin-top: 6px;
}
.mark-btn {
	border: 1px solid #d8d8d4;
	display: flex;
	flex-direction: column;
	align-items: center;
	justify-content: flex-end;
	padding-bottom: 1px;
	font-size: 11px;
	color: #555;
}
.mark-btn svg {
	width: 16px;
	height: 16px;
	margin-bottom: 4px;
}
.pill-row {
	display: flex;
	align-items: center;
	justify-content: flex-end;
	margin: 3px 4px 0 0;
}
.mark-btns + .pill-row {
	margin-top: 9px;
}
.pill-icon {
	width: 14px;
	height: 14px;
	margin-right: 4px;
}

/* shelves + view */
.workspace {
	flex: 1;
	padding-right: 6px;
	padding-left: 1px;
	display: flex;
	flex-direction: column;
}
.shelf {
	height: 27px;
	margin-bottom: 7px;
	background: #fafaf7;
	border: 1px solid #d4d4d0;
}
.shelf-name {
	width: 124px;
	height: 100%;
	border-right: 1px solid #d4d4d0;
	display: flex;
	align-items: center;
	padding-left: 6px;
	font-size: 11.5px;
	color: #666;
}
.shelf-name svg {
	width: 12px;
	height: 12px;
	margin-right: 6px;
}
.canvas {
	height: 528px;
	background: #70ff90;
	padding: 6px 7px 8px 6px;
}
.view-title {
	height: 30px;
	background: #ff0000;
	border: 3px solid #000;
	color: #fff;
	font-family: "Liberation Serif", serif;
	font-weight: 700;
	font-size: 20px;
	line-height: 25px;
	text-align: center;
}
.view-frame {
	height: 479px;
	margin: 5px 2px 0 3px;
	border: 3px solid #000;
}
.pie {
	display: block;
}
.pie-label {
	font-family: "Open Sans", sans-serif;
	font-size: 15.5px;
	font-weight: 700;
	text-anchor: middle;
	fill: #111;
}

/* sheet tabs */
.tabs {
	height: 30px;
	background: #e6e7e3;
	border-top: 1px solid #d4d4d0;
	display: flex;
	font-size: 11.8px;
	color: #777;
}
.tab {
	display: flex;
	align-items: center;
	justify-content: center;
	border-right: 1px solid #d4d4d0;
	flex: none;
	white-space: nowrap;
}
.tab svg {
	width: 12px;
	height: 12px;
	margin-right: 6px;
}
.tab svg.big {
	width: 16px;
	height: 16px;
	margin-right: 0;
}
.source-tab {
	width: 130px;
	justify-content: flex-start;
	padding-left: 8px;
	border-right: none;
}
.source-tab svg {
	width: 10px;
}
.tab.on {
	background: #fafaf7;
	color: #444;
	font-weight: 600;
}
.w56 { width: 56px; }
.w57 { width: 57px; }
.w102 { width: 102px; }
.w70 { width: 71px; }
.w32 { width: 32px; }

/* status bar */
.statusbar {
	height: 21px;
	background: #f3f4f2;
	border-top: 1px solid #d4d4d0;
	display: flex;
	align-items: center;
	font-size: 11px;
	color: #444;
	padding-bottom: 1px;
}
.s1 {
	margin-left: 3px;
}
.s2 {
	margin-left: 16px;
	letter-spacing: -0.3px;
}
.s3 {
	margin-left: 18px;
	letter-spacing: 0.1px;
}
.status-right {
	margin-left: auto;
	height: 100%;
	display: flex;
}
.status-cell {
	width: 27px;
	border-left: 1px solid #d4d4d0;
}
.status-cell.wide {
	width: 47px;
}
.pager {
	width: 70px;
	border-left: 1px solid #d4d4d0;
	display: flex;
	align-items: center;
	justify-content: space-around;
	padding: 0 2px;
}
.pager svg {
	width: 10px;
	height: 10px;
}
.views {
	width: 68px;
	border-left: 1px solid #d4d4d0;
	display: flex;
	align-items: center;
	gap: 9px;
	padding-left: 8px;
}
.views svg {
	width: 12px;
	height: 12px;
}

/* taskbar */
.taskbar {
	height: 30px;
	background: #283644;
	display: flex;
	align-items: center;
	color: #eee;
}
.start {
	width: 37px;
	height: 100%;
	display: flex;
	align-items: center;
	justify-content: center;
}
.start svg {
	width: 17px;
	height: 17px;
}
.task-search {
	width: 256px;
	height: 100%;
	background: #333;
	border: 1px solid #5a5a5a;
	display: flex;
	align-items: center;
	padding-left: 11px;
	font-size: 14px;
}
.task-search svg {
	width: 18px;
	height: 18px;
	margin-right: 9px;
}
.task-app {
	width: 37px;
	height: 100%;
	flex: none;
	display: flex;
	align-items: center;
	justify-content: center;
	position: relative;
}
.task-app.first {
	margin-right: 2px;
}
.task-app svg {
	width: 17px;
	height: 17px;
}
.task-app.open::after {
	content: "";
	position: absolute;
	left: 4px;
	right: 4px;
	bottom: 0;
	height: 2px;
	background: #5aa9e6;
}
.task-app.active {
	background: #46525e;
}
.task-app.active::after {
	left: 0;
	right: 0;
}
.tray {
	margin-left: auto;
	height: 100%;
	display: flex;
	align-items: center;
	font-size: 12px;
	color: #eee;
}
.t-bt { width: 12px; height: 16px; margin-right: 10px; }
.t-cloud { width: 16px; height: 12px; margin-right: 8px; }
.t-shield { width: 16px; height: 16px; margin-right: 9px; }
.t-batt { width: 16px; height: 12px; margin-right: 7px; }
.t-vol { width: 16px; height: 14px; margin-right: 11px; }
.t-wifi { width: 13px; height: 12px; margin-right: 11px; }
.t-lang { margin-right: 14px; }
.t-time { margin-right: 18px; letter-spacing: -0.2px; }
.t-note { width: 17px; height: 16px; margin-right: 24px; }
```
